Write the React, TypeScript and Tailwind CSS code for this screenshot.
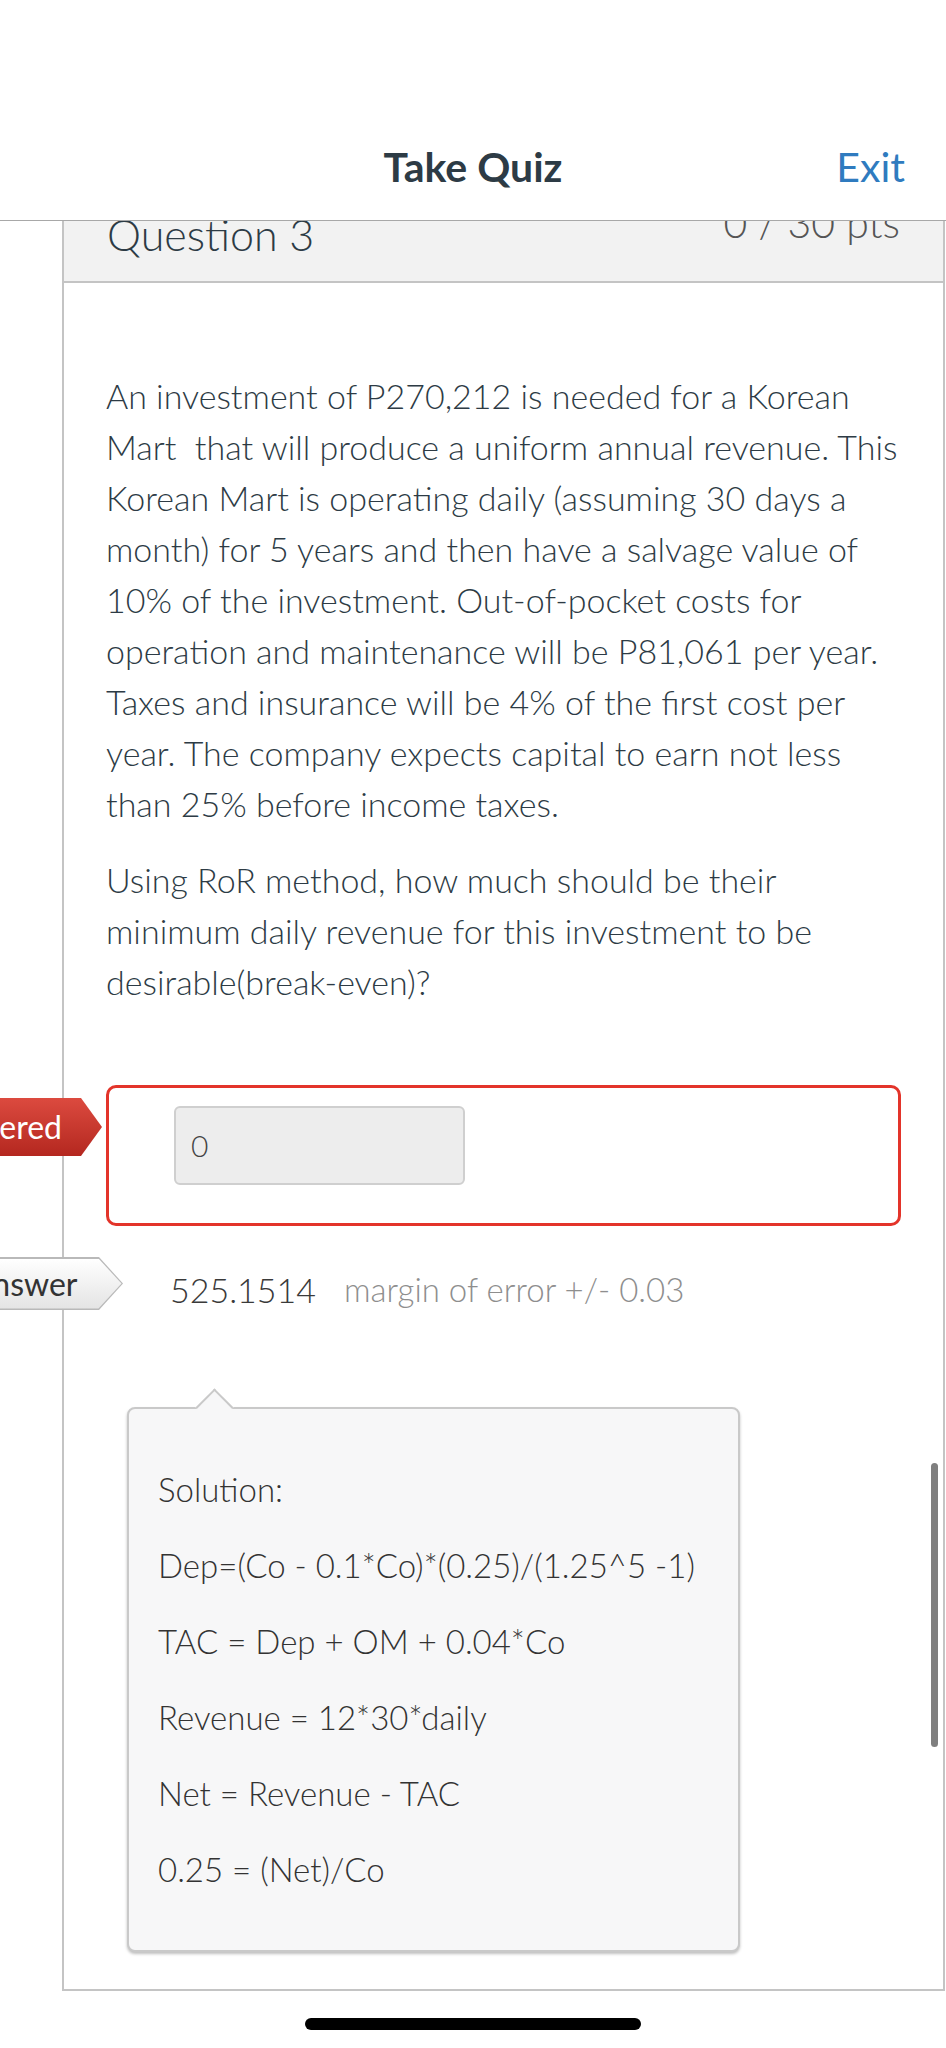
import React from "react";

const body =
  "An investment of P270,212 is needed for a Korean Mart\u00a0 that will produce a uniform annual revenue. This Korean Mart is operating daily (assuming 30 days a month) for 5 years and then have a salvage value of 10% of the investment. Out-of-pocket costs for operation and maintenance will be P81,061 per year. Taxes and insurance will be 4% of the first cost per year. The company expects capital to earn not less than 25% before income taxes.";

const solution = [
  "Solution:",
  "Dep=(Co - 0.1*Co)*(0.25)/(1.25^5 -1)",
  "TAC = Dep + OM + 0.04*Co",
  "Revenue = 12*30*daily",
  "Net = Revenue - TAC",
  "0.25 = (Net)/Co",
];

export default function App() {
  return (
    <div className="relative w-[946px] h-[2048px] overflow-hidden bg-white font-['Lato','Open_Sans',sans-serif] text-[#2d3b45]">
      {/* top bar */}
      <div className="relative z-10 h-[221px] bg-white border-b border-[#a8a8a8] pt-[143px]">
        <div className="grid grid-cols-[1fr_auto_1fr] items-center h-[48px]">
          <div />
          <h1 className="text-[41px] leading-[48px] font-bold">Take Quiz</h1>
          <div className="flex justify-end pr-[41px]">
            <span className="text-[41px] leading-[48px] text-[#2f7bbf]">Exit</span>
          </div>
        </div>
      </div>

      {/* question card */}
      <div className="ml-[62px] w-[883px] border-x-2 border-b-2 border-[#c4c4c4]">
        <div className="h-[62px] bg-[#f2f2f2] border-b-2 border-[#c4c4c4] overflow-hidden flex justify-between px-[43px]">
          <span className="-mt-[8px] text-[43px] leading-none font-light">Question 3</span>
          <span className="-mt-[19px] text-[41px] leading-none font-light text-[#555]">0 / 30 pts</span>
        </div>

        <div className="px-[42px] pt-[87px] pb-[37px]">
          <p className="text-[34px] leading-[51px] font-light mb-[25px]">{body}</p>
          <p className="text-[34px] leading-[51px] font-light">
            Using RoR method, how much should be their minimum daily revenue for this investment to be desirable(break-even)?
          </p>

          {/* your answer */}
          <div className="relative mt-[78px] h-[141px] border-[3px] border-[#e3342a] rounded-[10px] pt-[18px] pl-[65px]">
            <div className="absolute top-[10px] right-[calc(100%_+_7px)] w-[220px] h-[58px] bg-gradient-to-b from-[#dc4a3f] to-[#b4271f] [clip-path:polygon(0_0,calc(100%_-_21px)_0,100%_50%,calc(100%_-_21px)_100%,0_100%)] flex items-center justify-end pr-[40px]">
              <span className="whitespace-nowrap text-white text-[32px]">You Answered</span>
            </div>
            <div className="w-[291px] h-[79px] bg-[#ededed] border-2 border-[#cfcfcf] rounded-[6px] flex items-center pl-[15px]">
              <span className="text-[30px] font-light text-[#444]">0</span>
            </div>
          </div>

          {/* correct answer */}
          <div className="relative mt-[38px] pl-[64px] flex items-center h-[51px]">
            <div className="absolute top-[-7px] right-[calc(100%_-_17px)] w-[240px] h-[53px] bg-[#b9b9b9] [clip-path:polygon(0_0,calc(100%_-_24px)_0,100%_50%,calc(100%_-_24px)_100%,0_100%)]">
              <div className="absolute inset-[1.5px] bg-gradient-to-b from-[#ffffff] to-[#e4e4e4] [clip-path:polygon(0_0,calc(100%_-_23px)_0,100%_50%,calc(100%_-_23px)_100%,0_100%)] flex items-center justify-end pr-[44px]">
                <span className="whitespace-nowrap text-[#333] text-[32px]">Correct Answer</span>
              </div>
            </div>
            <span className="text-[34px] font-light text-[#3a3a3a]">525.1514</span>
            <span className="ml-[28px] text-[33px] font-light text-[#8e8e8e]">margin of error +/- 0.03</span>
          </div>

          {/* solution popover */}
          <div className="relative mt-[92px] ml-[21px] w-[613px] bg-[#f7f7f8] border-2 border-[#c9c9c9] rounded-[8px] shadow-[0_2px_3px_rgba(0,0,0,0.25)] pl-[29px] pt-[55px] pb-[55px]">
            <div className="absolute left-[72px] top-[-15px] w-[27px] h-[27px] rotate-45 bg-[#f7f7f8] border-l-2 border-t-2 border-[#c9c9c9]" />
            {solution.map((line, i) => (
              <p key={i} className={`relative text-[33px] leading-[51px] font-light text-[#333] ${i < solution.length - 1 ? "mb-[25px]" : ""}`}>
                {line}
              </p>
            ))}
          </div>
        </div>
      </div>

      {/* home indicator */}
      <div className="mx-auto mt-[27px] w-[336px] h-[12px] rounded-full bg-black" />

      {/* scroll indicator */}
      <div className="absolute left-[931px] top-[1463px] w-[7px] h-[284px] rounded-full bg-[#7f7f7f]" />
    </div>
  );
}
